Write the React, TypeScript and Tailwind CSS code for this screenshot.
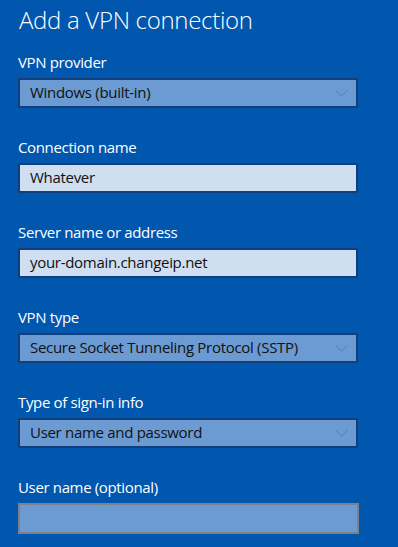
import React from "react";

const font = { fontFamily: '"Open Sans", "Noto Sans", sans-serif' };

function Chevron() {
  return (
    <svg width="13" height="7" viewBox="0 0 13 7" className="shrink-0">
      <path d="M0.5 0.5 L6.5 6 L12.5 0.5" fill="none" stroke="#5a7dae" strokeWidth="1" />
    </svg>
  );
}

function Select({ label, value }: { label: string; value: string }) {
  return (
    <div className="flex flex-col">
      <div className="text-[15px] leading-5 tracking-[-0.35px] text-white mb-[6px]">{label}</div>
      <div className="h-[30px] w-[340px] border-2 border-[#123f7c] bg-[#6b9bd2] flex items-center justify-between pl-[10px] pr-[8px]">
        <span className="text-[15px] leading-5 tracking-[-0.3px] text-[#111] -mt-[2px]">{value}</span>
        <Chevron />
      </div>
    </div>
  );
}

function TextField({ label, value, empty }: { label: string; value?: string; empty?: boolean }) {
  return (
    <div className="flex flex-col">
      <div className="text-[15px] leading-5 tracking-[-0.35px] text-white mb-[6px]">{label}</div>
      <div
        className={
          empty
            ? "h-[31px] w-[341px] border-2 border-[#7b8089] bg-[#6b9bd2]"
            : "h-[30px] w-[340px] border-2 border-[#123f7c] bg-[#cfdef0] flex items-center pl-[10px]"
        }
      >
        {value && <span className="text-[15px] leading-5 tracking-[-0.3px] text-[#111] -mt-[2px]">{value}</span>}
      </div>
    </div>
  );
}

export default function App() {
  return (
    <div className="w-[398px] h-[547px] overflow-hidden bg-[#0156ae] pl-[18px] pt-[4px]" style={font}>
      <h1 className="text-[24px] leading-8 font-light tracking-[-0.3px] text-white pl-[1px]">Add a VPN connection</h1>
      <div className="flex flex-col gap-[29px] mt-[16px]">
        <Select label="VPN provider" value="Windows (built-in)" />
        <TextField label="Connection name" value="Whatever" />
        <TextField label="Server name or address" value="your-domain.changeip.net" />
        <Select label="VPN type" value="Secure Socket Tunneling Protocol (SSTP)" />
        <Select label="Type of sign-in info" value="User name and password" />
        <TextField label="User name (optional)" empty />
      </div>
    </div>
  );
}
